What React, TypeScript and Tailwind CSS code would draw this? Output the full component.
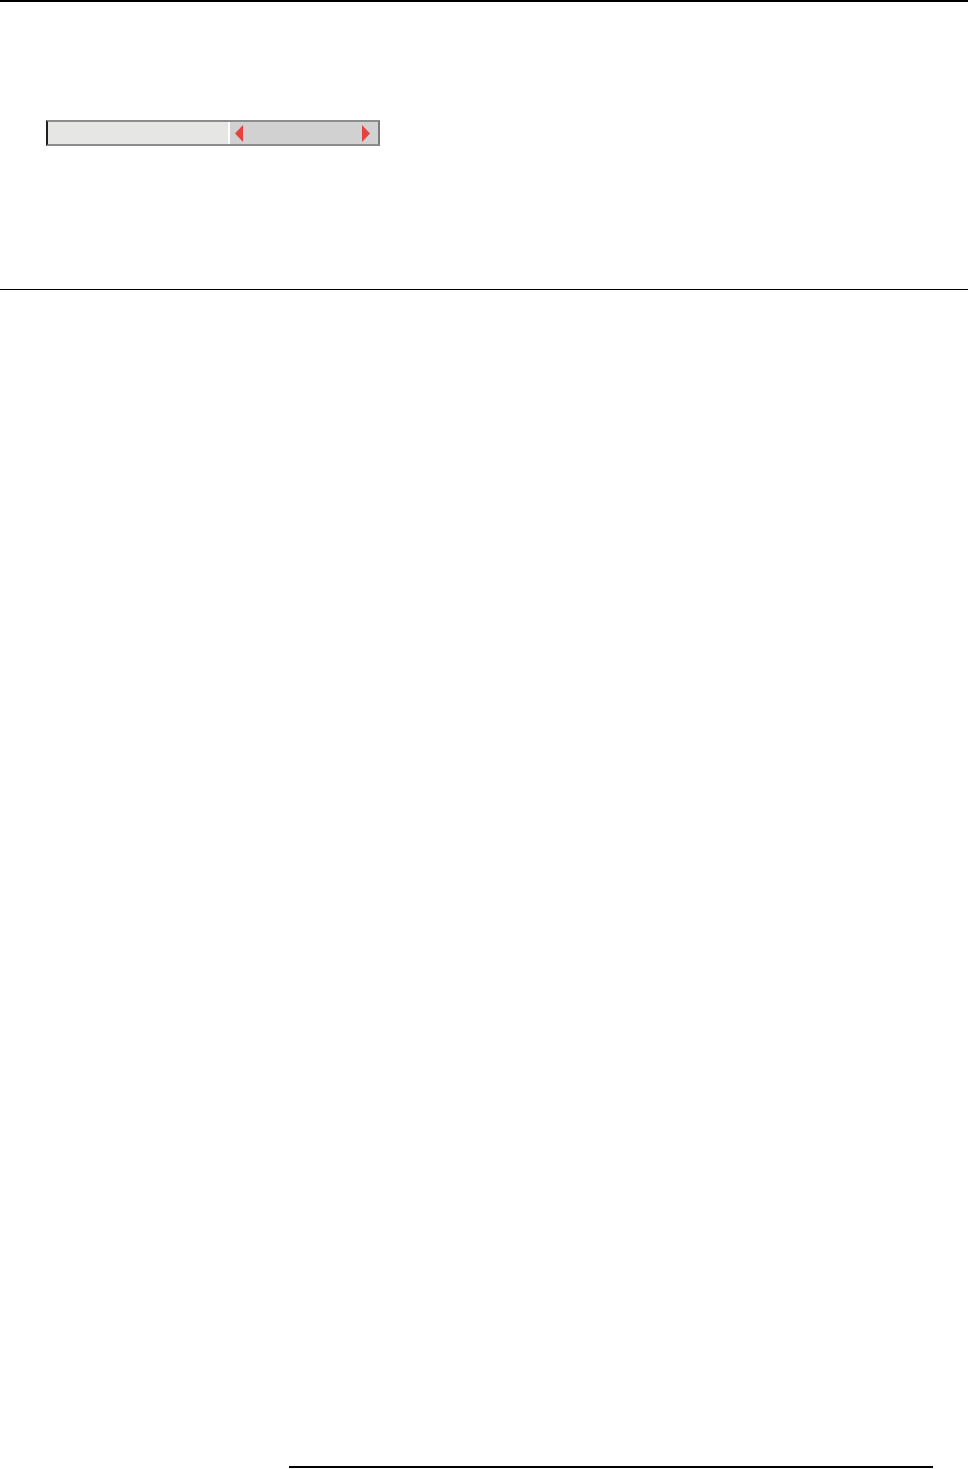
export default function App() {
  return (
    <div className="w-[968px] h-[1469px] bg-white flex flex-col">
      <div className="h-[2px] bg-black shrink-0" />

      <section className="h-[287px] shrink-0 pt-[118px] pl-[46px]">
        <div className="w-[334px] h-[26px] flex border-y-2 border-y-[#8c8c8c] border-l-2 border-l-[#1f1f1f] border-r-2 border-r-[#7c7c7c]">
          <div className="w-[180px] bg-[#e6e6e5]" />
          <div className="w-[2px] bg-white" />
          <div className="flex-1 bg-[#d0d1d0] flex items-center justify-between pl-[5px] pr-[8px]">
            <svg width="8" height="17" viewBox="0 0 8 17">
              <polygon points="8,0 0,8.5 8,17" fill="#e8403f" />
            </svg>
            <svg width="8" height="17" viewBox="0 0 8 17">
              <polygon points="0,0 8,8.5 0,17" fill="#e8403f" />
            </svg>
          </div>
        </div>
      </section>

      <div className="h-px bg-black shrink-0" />

      <div className="flex-1" />

      <div className="ml-[289px] w-[644px] h-[2px] bg-black mb-px shrink-0" />
    </div>
  )
}
